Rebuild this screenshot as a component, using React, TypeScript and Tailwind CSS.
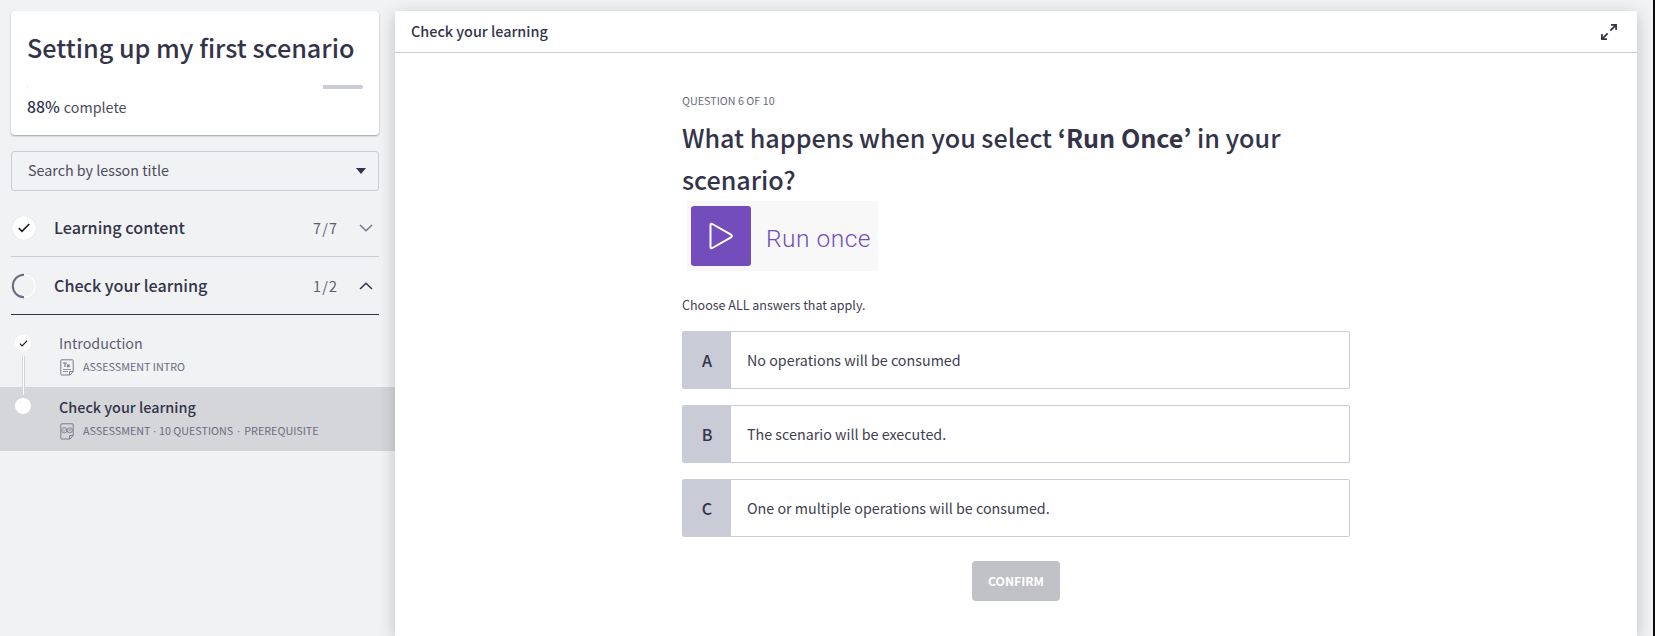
import React from 'react';

function Check({ className }: { className: string }) {
  return (
    <svg viewBox="0 0 12 10" className={className} fill="none" stroke="#1f2027" strokeWidth="1.7">
      <path d="M0.8 5.2 4 8.3 11.2 1" />
    </svg>
  );
}

function Chevron({ up }: { up?: boolean }) {
  return (
    <svg viewBox="0 0 14 8" className="ml-auto h-2 w-3.5" fill="none" stroke={up ? '#33344a' : '#747689'} strokeWidth="1.5">
      <path d={up ? 'M1 7 7 1.2 13 7' : 'M1 1 7 6.8 13 1'} />
    </svg>
  );
}

function DocIcon({ kind }: { kind: 'text' | 'quiz' }) {
  return (
    <svg viewBox="0 0 14 17" className="h-[17px] w-3.5 shrink-0" fill="none" stroke="#7b7c8e" strokeWidth="1">
      <path d="M1.500 .8H12.500Q13.200.8 13.200 1.500V12.500L10 16H1.500Q.8 16 .8 15.300V1.500Q.8.8 1.500.8ZM9.600 16V12.600H13.200" />
      {kind === 'text' ? (
        <g>
          <path d="M3 4H7M5 4V8M7 5.500 9.600 8.200M9.600 5.500 7 8.200" strokeWidth="1.200" />
          <path d="M3 10.500H11M3 12.500H8" strokeWidth=".8" />
        </g>
      ) : (
        <g strokeWidth=".9">
          <circle cx="4.300" cy="7.300" r="2.600" />
          <circle cx="9.700" cy="7.300" r="2.600" />
          <path d="M3.200 7.300 4.200 8.200 5.600 6.500M8.700 6.300 10.700 8.300M10.700 6.300 8.700 8.300" strokeWidth=".8" />
        </g>
      )}
    </svg>
  );
}

function Section({ title, count, open }: { title: string; count: string; open?: boolean }) {
  return (
    <div className={`flex h-[58px] items-center border-b pr-1.5 ${open ? 'border-[#33344a]' : 'border-[#c9cbd6]'}`}>
      {open ? (
        <svg viewBox="0 0 26 26" className="h-[26px] w-[26px]" fill="none">
          <circle cx="13" cy="13" r="11.500" stroke="#fff" strokeWidth="1.500" />
          <circle cx="13" cy="13" r="12.300" stroke="#dcdde2" strokeWidth=".4" />
          <path d="M13 1.800A11.200 11.200 0 0 0 13 24.200" stroke="#6b6c7e" strokeWidth="2" />
        </svg>
      ) : (
        <div className="flex h-[26px] w-[26px] items-center justify-center">
          <div className="flex h-6 w-6 items-center justify-center rounded-full bg-white shadow-[0_0_1px_rgba(0,0,0,0.2)]">
            <Check className="h-2.5 w-3" />
          </div>
        </div>
      )}
      <span className="ml-[17px] w-[259px] text-[16.15px] font-medium text-[#33344a]">{title}</span>
      <span className="text-[14.3px] tracking-[1.2px] text-[#5d5e70]">{count}</span>
      <Chevron up={open} />
    </div>
  );
}

function Option({ letter, text }: { letter: string; text: string }) {
  return (
    <div className="flex h-[58px] overflow-hidden rounded-xs border border-[#c9cbd6] leading-[58px]">
      <div className="-my-px flex w-12 items-center justify-center bg-[#c9cbd6] text-[16.1px] font-medium text-[#33344a]">{letter}</div>
      <div className="-my-px ml-4 text-[14.3px] text-[#3f4052]">{text}</div>
    </div>
  );
}

export default function App() {
  return (
    <div className="flex h-[636px] w-[1655px] overflow-hidden border-r-2 border-[#0b0b0d] bg-[#f1f2f4] font-['Noto_Sans_CJK_KR','Noto_Sans_CJK_SC',sans-serif] text-[#33344a]">
      <aside className="w-[395px] shrink-0 pt-[11px]">
        <div className="ml-[11px] w-[368px]">
          <div className="h-[124px] rounded bg-white px-4 pt-4 shadow-[0_1px_2px_rgba(0,0,0,0.35)]">
            <h1 className="h-10 text-[25.2px] leading-10 font-medium whitespace-nowrap">Setting up my first scenario</h1>
            <div className="mt-[18px] flex h-1 justify-between">
              <div className="w-px bg-[#f1f2f4]" />
              <div className="w-10 rounded-r-full bg-[#c9cbd6]" />
            </div>
            <div className="mt-2 flex items-baseline gap-1 leading-5 text-[#4b4c5e]">
              <span className="text-[15.8px] leading-5 font-medium text-[#33344a]">88%</span>
              <span className="text-[14.3px]">complete</span>
            </div>
          </div>
          <div className="mt-4 flex h-10 items-center justify-between rounded-[3px] border border-[#c9cbd6] pr-3 pl-4">
            <span className="-mt-0.5 text-[14.3px] text-[#4b4c5e]">Search by lesson title</span>
            <svg viewBox="0 0 10 6" className="h-1.5 w-2.5" fill="#33344a">
              <path d="M0 0H10L5 6Z" />
            </svg>
          </div>
          <div className="mt-2">
            <Section title="Learning content" count="7/7" />
            <Section title="Check your learning" count="1/2" open />
          </div>
        </div>
        <div className="mt-2 flex h-16">
          <div className="relative ml-[15px] w-11 pt-3">
            <div className="flex h-4 w-4 items-center justify-center rounded-full bg-white">
              <Check className="h-[7px] w-[9px]" />
            </div>
            <div className="absolute top-8 left-[7px] h-10 w-[3px] rounded-full border-x border-[#d3d4d9] bg-white" />
          </div>
          <div className="pt-2.5">
            <div className="text-[14.3px] leading-5 text-[#5d5e70]">Introduction</div>
            <div className="mt-1 flex h-5 items-center pl-px text-[10.75px] text-[#6b6c7e]">
              <DocIcon kind="text" />
              <span className="ml-[9px]">ASSESSMENT INTRO</span>
            </div>
          </div>
        </div>
        <div className="flex h-16 bg-[#d5d6da]">
          <div className="ml-[15px] w-11 pt-[11px]">
            <div className="h-4 w-4 rounded-full bg-white" />
          </div>
          <div className="pt-2.5">
            <div className="text-[14.4px] leading-5 font-medium">Check your learning</div>
            <div className="mt-1 flex h-5 items-center pl-px text-[10.75px] text-[#6b6c7e]">
              <DocIcon kind="quiz" />
              <span className="ml-[9px]">ASSESSMENT</span>
              <span className="w-[8.5px] text-center font-['Open_Sans']">·</span>
              <span>10 QUESTIONS</span>
              <span className="w-[11px] text-center font-['Open_Sans']">·</span>
              <span>PREREQUISITE</span>
            </div>
          </div>
        </div>
      </aside>

      <main className="relative mt-[11px] w-[1242px] shrink-0 bg-white shadow-[0_4px_16px_rgba(0,0,0,0.2)]">
        <header className="flex h-[42px] items-center justify-between border-b border-[#c9cbd6] pr-5 pl-4">
          <span className="-mt-0.5 text-[14.4px] font-medium">Check your learning</span>
          <svg viewBox="0 0 16 16" className="h-4 w-4" fill="none" stroke="#33344a" strokeWidth="1.700">
            <path d="M10 .9H15.100V6M15.100 .9 9.300 6.700M6 15.100H.9V10M.9 15.100 6.700 9.300" />
          </svg>
        </header>
        <div className="ml-[287px] w-[668px] pt-[38px]">
          <div className="h-5 text-[10.75px] leading-5 text-[#6b6c7e]">QUESTION 6 OF 10</div>
          <h2 className="mt-[5px] text-[25.15px] leading-[42px] font-medium">
            What happens when you select <strong className="font-bold">‘Run Once’</strong> in your
            <br />
            scenario?
          </h2>
          <div className="mt-px ml-[5px] flex h-[70px] w-[191px] bg-[#f8f8f8] pt-[5px] pl-1">
            <div className="flex h-[60px] w-[60px] items-center justify-center rounded-[3px] bg-[#744dbd]">
              <svg viewBox="0 0 26 28" className="h-7 w-[26px]" fill="none" stroke="#fff" strokeWidth="2" strokeLinejoin="round">
                <path d="M2.500 3Q2.500 1 4.300 2L23 12.700Q24.800 14 23 15.300L4.300 26Q2.500 27 2.500 25Z" />
              </svg>
            </div>
            <span className="ml-[15px] pt-[3px] font-['Roboto'] text-[24.5px] leading-[60px] font-light tracking-[0.5px] whitespace-nowrap text-[#744dbd]">Run once</span>
          </div>
          <p className="mt-6 h-5 text-[12.5px] leading-5 text-[#3f4052]">Choose ALL answers that apply.</p>
          <div className="mt-4 flex flex-col gap-4">
            <Option letter="A" text="No operations will be consumed" />
            <Option letter="B" text="The scenario will be executed." />
            <Option letter="C" text="One or multiple operations will be consumed." />
          </div>
          <div className="mt-6 flex justify-center">
            <button className="h-10 w-[88px] rounded bg-[#c1c2c7] text-[12.2px] font-bold text-white">CONFIRM</button>
          </div>
        </div>
      </main>
    </div>
  );
}
